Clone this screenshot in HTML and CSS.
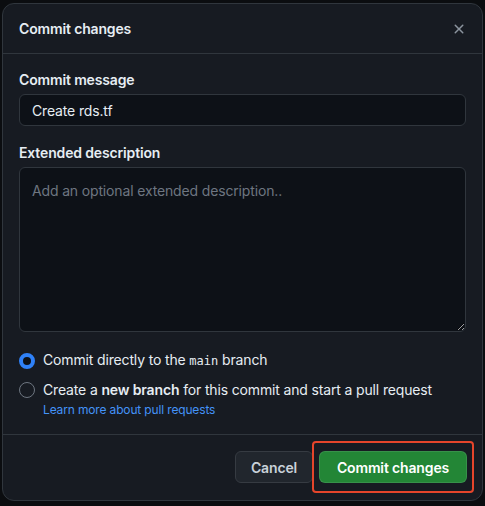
FILE: index.html
```html
<!DOCTYPE html>
<html lang="en">
<head>
<meta charset="utf-8">
<title>Commit changes</title>
<link rel="stylesheet" href="styles.css">
</head>
<body>
<div class="dialog">
  <div class="header">
    <h1 class="title">Commit changes</h1>
    <button class="close" aria-label="Close">
      <svg width="16" height="16" viewBox="0 0 16 16"><path fill="currentColor" d="M3.72 3.72a.75.75 0 0 1 1.06 0L8 6.94l3.22-3.22a.749.749 0 0 1 1.275.326.749.749 0 0 1-.215.734L9.06 8l3.22 3.22a.749.749 0 0 1-.326 1.275.749.749 0 0 1-.734-.215L8 9.06l-3.22 3.22a.751.751 0 0 1-1.042-.018.751.751 0 0 1-.018-1.042L6.94 8 3.72 4.78a.75.75 0 0 1 0-1.06Z"/></svg>
    </button>
  </div>
  <div class="body">
    <label class="label">Commit message</label>
    <input class="input" type="text" value="Create rds.tf">
    <label class="label label-2">Extended description</label>
    <textarea class="textarea" placeholder="Add an optional extended description.."></textarea>
    <div class="options">
      <div class="option">
        <span class="radio checked"></span>
        <span class="opt-text">Commit directly to the <code class="code">main</code> branch</span>
      </div>
      <div class="option">
        <span class="radio"></span>
        <span class="opt-text">Create a <strong>new branch</strong> for this commit and start a pull request</span>
      </div>
      <a class="learn" href="#">Learn more about pull requests</a>
    </div>
  </div>
  <div class="footer">
    <button class="btn btn-cancel">Cancel</button>
    <div class="primary-wrap">
      <button class="btn btn-primary">Commit changes</button>
      <span class="highlight"></span>
    </div>
  </div>
</div>
</body>
</html>
```

FILE: styles.css
```css
* { box-sizing: border-box; }
html, body { margin: 0; }
body {
  background: #0b0d10;
  padding: 3px 2px 5px 2px;
  font-family: Inter, "Liberation Sans", sans-serif;
  letter-spacing: -0.15px;
  color: #e6edf3;
  color-scheme: dark;
}
.dialog {
  width: 481px;
  height: 498px;
  background: #171b22;
  border: 1px solid #30363d;
  border-radius: 12px;
  display: flex;
  flex-direction: column;
  overflow: hidden;
}
.header {
  display: flex;
  align-items: center;
  justify-content: space-between;
  height: 50px;
  padding: 0 7px 0 16px;
  border-bottom: 1px solid #30363d;
}
.title {
  margin: 0;
  font-size: 14px;
  font-weight: 600;
  line-height: 20px;
  color: #e6edf3;
}
.close {
  width: 32px;
  height: 32px;
  border: 0;
  background: transparent;
  color: #8b949e;
  display: flex;
  align-items: center;
  justify-content: center;
  padding: 0;
}
.body {
  padding: 16px 16px 0 16px;
  display: flex;
  flex-direction: column;
  flex: 1;
}
.label {
  font-size: 14px;
  font-weight: 600;
  line-height: 20px;
  margin-bottom: 4px;
}
.label-2 { margin-top: 17px; }
.input {
  height: 32px;
  width: 100%;
  background: #0d1117;
  border: 1px solid #30363d;
  border-radius: 6px;
  padding: 0 12px;
  font-family: inherit;
  letter-spacing: inherit;
  font-size: 14px;
  color: #e6edf3;
  outline: none;
}
.textarea {
  height: 165px;
  width: 100%;
  background: #0d1117;
  border: 1px solid #30363d;
  border-radius: 6px;
  padding: 13px 12px 10px;
  font-family: inherit;
  letter-spacing: inherit;
  font-size: 14px;
  line-height: 20px;
  color: #e6edf3;
  resize: vertical;
  outline: none;
}
.textarea::placeholder { color: #6e7681; }
.options {
  margin-top: 18px;
  display: flex;
  flex-direction: column;
  gap: 9px;
}
.option {
  display: flex;
  align-items: center;
  gap: 8px;
  font-size: 14px;
  line-height: 20px;
  color: #e6edf3;
}
.opt-text strong { font-weight: 600; }
.code {
  font-family: "DejaVu Sans Mono", "Liberation Mono", monospace;
  font-size: 12px;
  letter-spacing: 0;
}
.radio {
  width: 16px;
  height: 16px;
  border-radius: 50%;
  border: 1px solid #6e7681;
  flex: none;
}
.radio.checked {
  border: 4px solid #2f81f7;
  background: #0d1117;
}
.learn {
  margin-top: -8px;
  margin-left: 24px;
  font-size: 12px;
  line-height: 18px;
  color: #4493f8;
  text-decoration: none;
}
.footer {
  height: 66px;
  border-top: 1px solid #30363d;
  display: flex;
  align-items: center;
  justify-content: flex-end;
  gap: 6px;
  padding: 0 15px 1px 16px;
}
.btn {
  height: 32px;
  border-radius: 6px;
  font-family: inherit;
  letter-spacing: inherit;
  font-size: 14px;
  font-weight: 600;
  padding: 0 12px;
  white-space: nowrap;
  border: 1px solid rgba(240, 246, 252, 0.1);
}
.btn-cancel {
  width: 78px;
  background: #21262d;
  color: #c9d1d9;
  border-color: #363b42;
}
.primary-wrap { position: relative; }
.btn-primary {
  width: 148px;
  background: #238636;
  color: #ffffff;
  display: block;
}
.highlight {
  position: absolute;
  left: -7px;
  top: -10px;
  right: -7px;
  bottom: -10px;
  border: 2px solid #e5452b;
  border-radius: 4px;
  pointer-events: none;
}
```
